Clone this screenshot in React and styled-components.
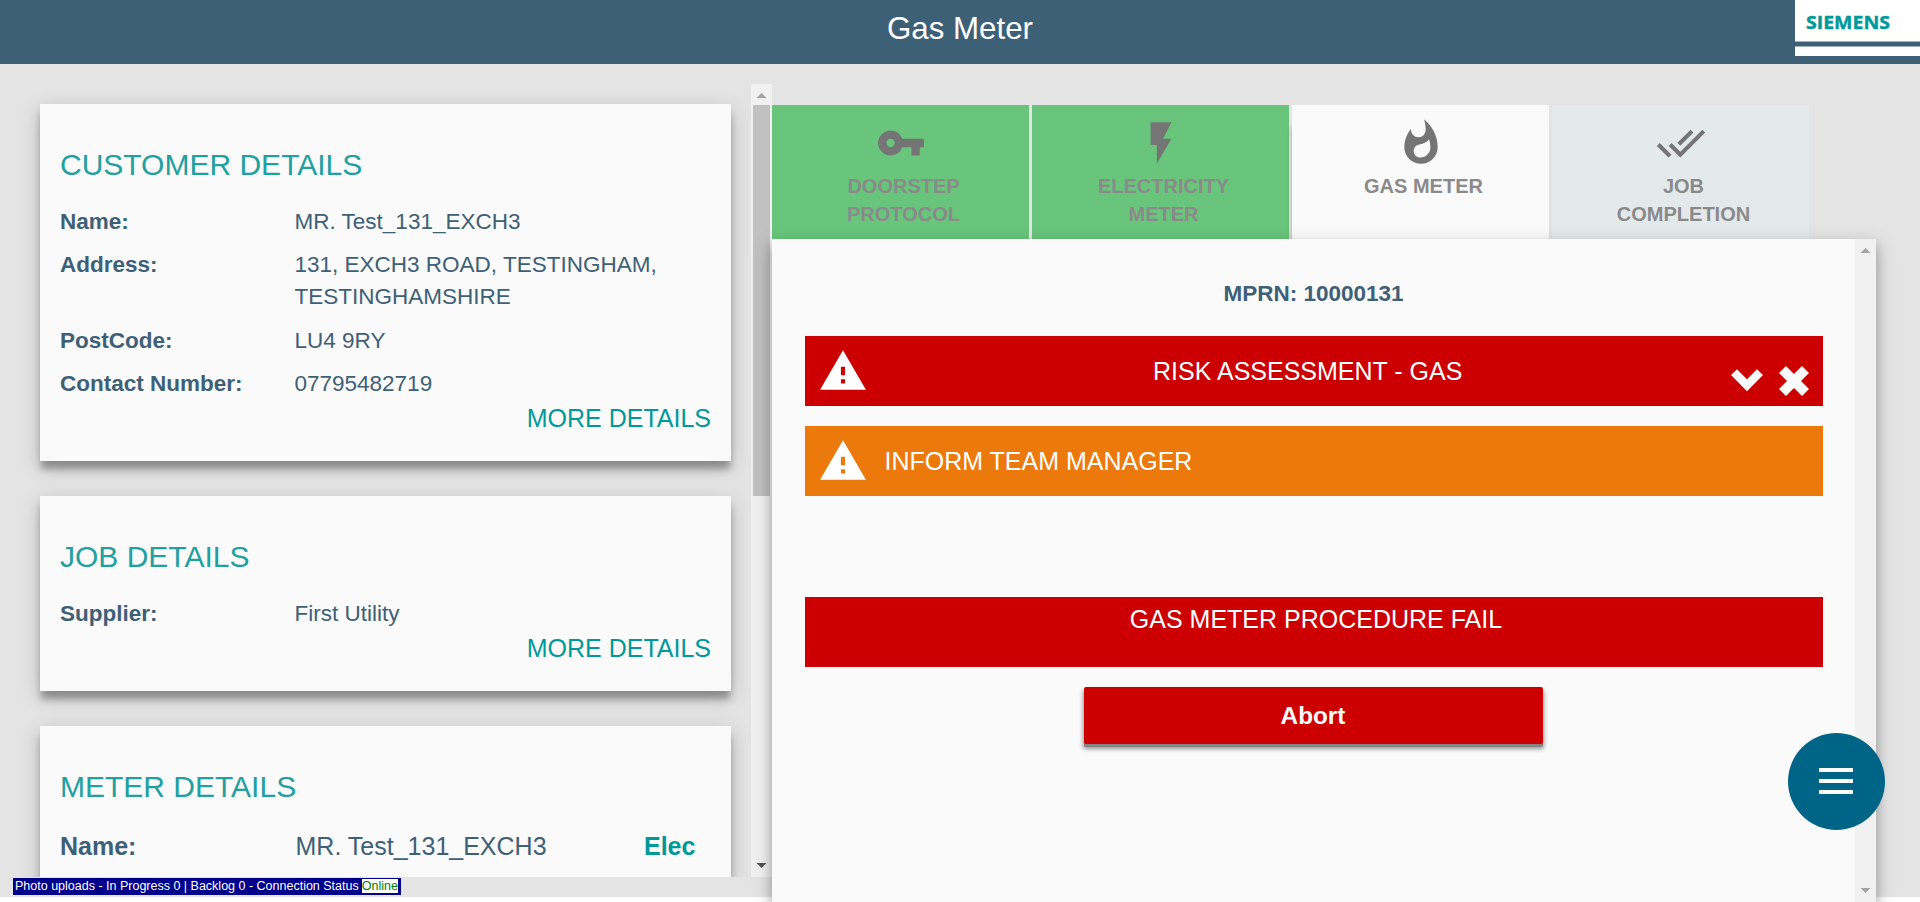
import React from "react";
import styled, { createGlobalStyle } from "styled-components";
import { MdVpnKey, MdFlashOn, MdWhatshot, MdDoneAll, MdWarning } from "react-icons/md";

const GlobalStyle = createGlobalStyle`
  * { box-sizing: border-box; }
  html, body { margin: 0; background: #fff; }
  body { font-family: "Liberation Sans", Arial, sans-serif; color: #3e6077; overflow: hidden; }
`;

const Page = styled.div`
  position: relative;
  display: flex;
  flex-direction: column;
  width: 1920px;
  height: 902px;
  background: linear-gradient(#e4e4e4 897px, #fff 897px);
  overflow: hidden;
`;

const Header = styled.header`
  display: grid;
  grid-template-columns: 1fr auto 1fr;
  height: 64px;
  flex: none;
  background: #3e6076;
`;

const Title = styled.h1`
  grid-column: 2;
  margin: 0;
  font-size: 31.3px;
  font-weight: 400;
  line-height: 58px;
  color: #fff;
`;

const Logo = styled.svg`
  display: block;
  justify-self: end;
  width: 125px;
  height: 56px;
`;

const Body = styled.main`
  display: flex;
  flex: 1;
  min-height: 0;
`;

const LeftPane = styled.section`
  display: flex;
  width: 772px;
  height: 793px;
  margin-top: 20px;
  overflow: hidden;
`;

const Cards = styled.div`
  display: flex;
  flex-direction: column;
  gap: 35px;
  width: 751px;
  padding: 20px 20px 0 40px;
`;

const Card = styled.article`
  flex: none;
  height: ${(p) => p.$height}px;
  padding: 41px 20px 0;
  background: #fafafa;
  box-shadow: 0 9px 7px -1px rgba(0, 0, 0, 0.3), 0 6px 20px 0 rgba(0, 0, 0, 0.19);
`;

const CardTitle = styled.h2`
  margin: 0 0 21px;
  font-size: 30px;
  font-weight: 400;
  line-height: 40px;
  color: #229f9f;
`;

const Row = styled.div`
  display: grid;
  grid-template-columns: ${(p) => (p.$large ? "235.5px 348.5px 1fr" : "234.5px 1fr")};
  margin-bottom: 11.3px;
  padding-top: ${(p) => (p.$large ? 2 : 0)}px;
  font-size: ${(p) => (p.$large ? 25 : 22.5)}px;
  line-height: 32px;
`;

const Label = styled.span`
  font-weight: 700;
`;

const Fuel = styled.span`
  font-weight: 700;
  color: #009999;
`;

const More = styled.a`
  display: block;
  margin-top: -9.5px;
  text-align: right;
  font-size: 25px;
  line-height: 32px;
  color: #009999;
`;

const Track = styled.div`
  display: flex;
  flex-direction: column;
  justify-content: space-between;
  align-items: center;
  flex: none;
  width: 21px;
  background: #f1f1f1;
`;

const Thumb = styled.div`
  width: 17px;
  height: 391px;
  margin-bottom: auto;
  background: #c1c1c1;
`;

const Arrow = styled.svg`
  display: block;
  flex: none;
  width: 21px;
  height: 21px;
  fill: ${(p) => p.$color};
`;

const RightPane = styled.section`
  display: flex;
  flex-direction: column;
  width: 1104px;
  padding-top: 41px;
`;

const Tabs = styled.nav`
  display: flex;
  gap: 3px;
  height: 134px;
  flex: none;
`;

const tabColors = { done: "#68c57b", active: "#fafafa", pending: "#e4eaec" };

const Tab = styled.div`
  display: flex;
  flex-direction: column;
  align-items: center;
  width: 257px;
  padding-top: 13px;
  background: ${(p) => tabColors[p.$state]};
  box-shadow: ${(p) => (p.$state === "active" ? "-2px 20px 5px -2px rgba(0, 0, 0, 0.28)" : "none")};
  color: #757575;
`;

const TabLabel = styled.span`
  width: 140px;
  margin: 4px 0 0 6px;
  text-align: center;
  font-size: 20px;
  font-weight: 700;
  line-height: 28px;
  color: #8a8a8a;
`;

const Panel = styled.div`
  position: relative;
  display: flex;
  flex: 1;
  background: #fafafa;
  box-shadow: 0 8px 10px 1px rgba(0, 0, 0, 0.2), 0 6px 20px 0 rgba(0, 0, 0, 0.19);
`;

const Content = styled.div`
  display: flex;
  flex-direction: column;
  align-items: center;
  flex: 1;
  padding: 39px 32px 0 33px;
`;

const Mprn = styled.div`
  margin: 0 1px 26px 0;
  font-size: 22.5px;
  font-weight: 700;
  line-height: 32px;
`;

const Banner = styled.div`
  display: flex;
  align-items: center;
  align-self: stretch;
  height: 70px;
  flex: none;
  margin-bottom: 20px;
  padding: 0 13px;
  background: ${(p) => p.$color};
  color: #fff;
  font-size: 25px;
  line-height: 32px;
`;

const BannerText = styled.span`
  flex: ${(p) => (p.$centered ? 1 : "none")};
  margin-left: 16.5px;
  text-align: ${(p) => (p.$centered ? "center" : "left")};
`;

const BannerActions = styled.div`
  display: flex;
  align-items: center;
  gap: 16px;
  width: 79px;
  padding-top: 19px;
`;

const FailBanner = styled(Banner)`
  align-items: flex-start;
  justify-content: center;
  margin-top: 81px;
  padding: 6px 0 0 4px;
`;

const Abort = styled.button`
  width: 459px;
  height: 57px;
  margin-right: 2px;
  padding: 1px 0 0;
  border: 0;
  border-radius: 2px;
  background: #cc0000;
  box-shadow: 0 3px 0 0 #858585, 0 4px 4px 1px rgba(0, 0, 0, 0.4);
  color: #fff;
  font: 700 24.3px "Liberation Sans", Arial, sans-serif;
`;

const MenuButton = styled.button`
  position: absolute;
  left: 1788px;
  top: 732.5px;
  display: flex;
  flex-direction: column;
  align-items: center;
  justify-content: center;
  gap: 7px;
  width: 97px;
  height: 97px;
  padding: 0 1px 0 0;
  border: 0;
  border-radius: 50%;
  background: #006487;
`;

const MenuBar = styled.span`
  width: 34px;
  height: 4px;
  background: #fff;
`;

const Status = styled.div`
  position: absolute;
  left: 13px;
  top: 878px;
  display: flex;
  align-items: flex-start;
  gap: 3px;
  height: 17px;
  width: 388px;
  padding: 1px 0 0 2px;
  background: #00008b;
  color: #fff;
  font-size: 12.5px;
  line-height: 14px;
  white-space: nowrap;
`;

const Online = styled.span`
  background: #fff;
  color: #008000;
`;

function ArrowUp({ color = "#a3a3a3", y = 9 }) {
  return (
    <Arrow $color={color} viewBox="0 0 21 21">
      <path d={`M5.5 ${y + 5}L10.5 ${y}L15.5 ${y + 5}Z`} />
    </Arrow>
  );
}

function ArrowDown({ color = "#a3a3a3", y = 7 }) {
  return (
    <Arrow $color={color} viewBox="0 0 21 21">
      <path d={`M5.5 ${y}L10.5 ${y + 5}L15.5 ${y}Z`} />
    </Arrow>
  );
}

function Chevron() {
  return (
    <svg width="32" height="23" viewBox="0 0 32 23" fill="#fafafa">
      <path d="M0 6L6 0.3L16 10.3L26 0.3L32 6L16 22.3Z" />
    </svg>
  );
}

function Cross() {
  return (
    <svg width="30" height="30" viewBox="0 0 30 30" fill="#fafafa">
      <path d="M7 0L15 8L23 0L30 7L22 15L30 23L23 30L15 22L7 30L0 23L8 15L0 7Z" />
    </svg>
  );
}

const tabs = [
  { label: "DOORSTEP PROTOCOL", Icon: MdVpnKey, state: "done" },
  { label: "ELECTRICITY METER", Icon: MdFlashOn, state: "done" },
  { label: "GAS METER", Icon: MdWhatshot, state: "active" },
  { label: "JOB COMPLETION", Icon: MdDoneAll, state: "pending" },
];

export default function App() {
  return (
    <Page>
      <GlobalStyle />
      <Header>
        <Title>Gas Meter</Title>
        <Logo viewBox="0 0 125 56">
          <rect width="125" height="56" fill="#fff" />
          <rect y="41" width="125" height="6" fill="#9fb0bb" />
          <rect y="42" width="125" height="4" fill="#3e6076" />
          <text x="11" y="28.7" fontFamily="Open Sans, sans-serif" fontWeight="700" fontSize="18" textLength="84" lengthAdjust="spacingAndGlyphs" fill="#009999" stroke="#009999" strokeWidth="0.4">SIEMENS</text>
        </Logo>
      </Header>
      <Body>
        <LeftPane>
          <Cards>
            <Card $height={357}>
              <CardTitle>CUSTOMER DETAILS</CardTitle>
              <Row><Label>Name:</Label><span>MR. Test_131_EXCH3</span></Row>
              <Row><Label>Address:</Label><span>131, EXCH3 ROAD, TESTINGHAM, TESTINGHAMSHIRE</span></Row>
              <Row><Label>PostCode:</Label><span>LU4 9RY</span></Row>
              <Row><Label>Contact Number:</Label><span>07795482719</span></Row>
              <More>MORE DETAILS</More>
            </Card>
            <Card $height={195}>
              <CardTitle>JOB DETAILS</CardTitle>
              <Row><Label>Supplier:</Label><span>First Utility</span></Row>
              <More>MORE DETAILS</More>
            </Card>
            <Card $height={300}>
              <CardTitle>METER DETAILS</CardTitle>
              <Row $large><Label>Name:</Label><span>MR. Test_131_EXCH3</span><Fuel>Elec</Fuel></Row>
            </Card>
          </Cards>
          <Track>
            <ArrowUp />
            <Thumb />
            <ArrowDown color="#505050" />
          </Track>
        </LeftPane>
        <RightPane>
          <Tabs>
            {tabs.map(({ label, Icon, state }) => (
              <Tab key={label} $state={state}>
                <Icon size={50} />
                <TabLabel>{label}</TabLabel>
              </Tab>
            ))}
          </Tabs>
          <Panel>
            <Content>
              <Mprn>MPRN: 10000131</Mprn>
              <Banner $color="#cc0000">
                <MdWarning size={50} />
                <BannerText $centered>RISK ASSESSMENT - GAS</BannerText>
                <BannerActions><Chevron /><Cross /></BannerActions>
              </Banner>
              <Banner $color="#ec790c">
                <MdWarning size={50} />
                <BannerText>INFORM TEAM MANAGER</BannerText>
              </Banner>
              <FailBanner $color="#cc0000">GAS METER PROCEDURE FAIL</FailBanner>
              <Abort>Abort</Abort>
            </Content>
            <Track>
              <ArrowUp />
              <ArrowDown />
            </Track>
          </Panel>
        </RightPane>
      </Body>
      <Status>
        <span>Photo uploads - In Progress 0 | Backlog 0 - Connection Status</span>
        <Online>Online</Online>
      </Status>
      <MenuButton aria-label="Menu"><MenuBar /><MenuBar /><MenuBar /></MenuButton>
    </Page>
  );
}
